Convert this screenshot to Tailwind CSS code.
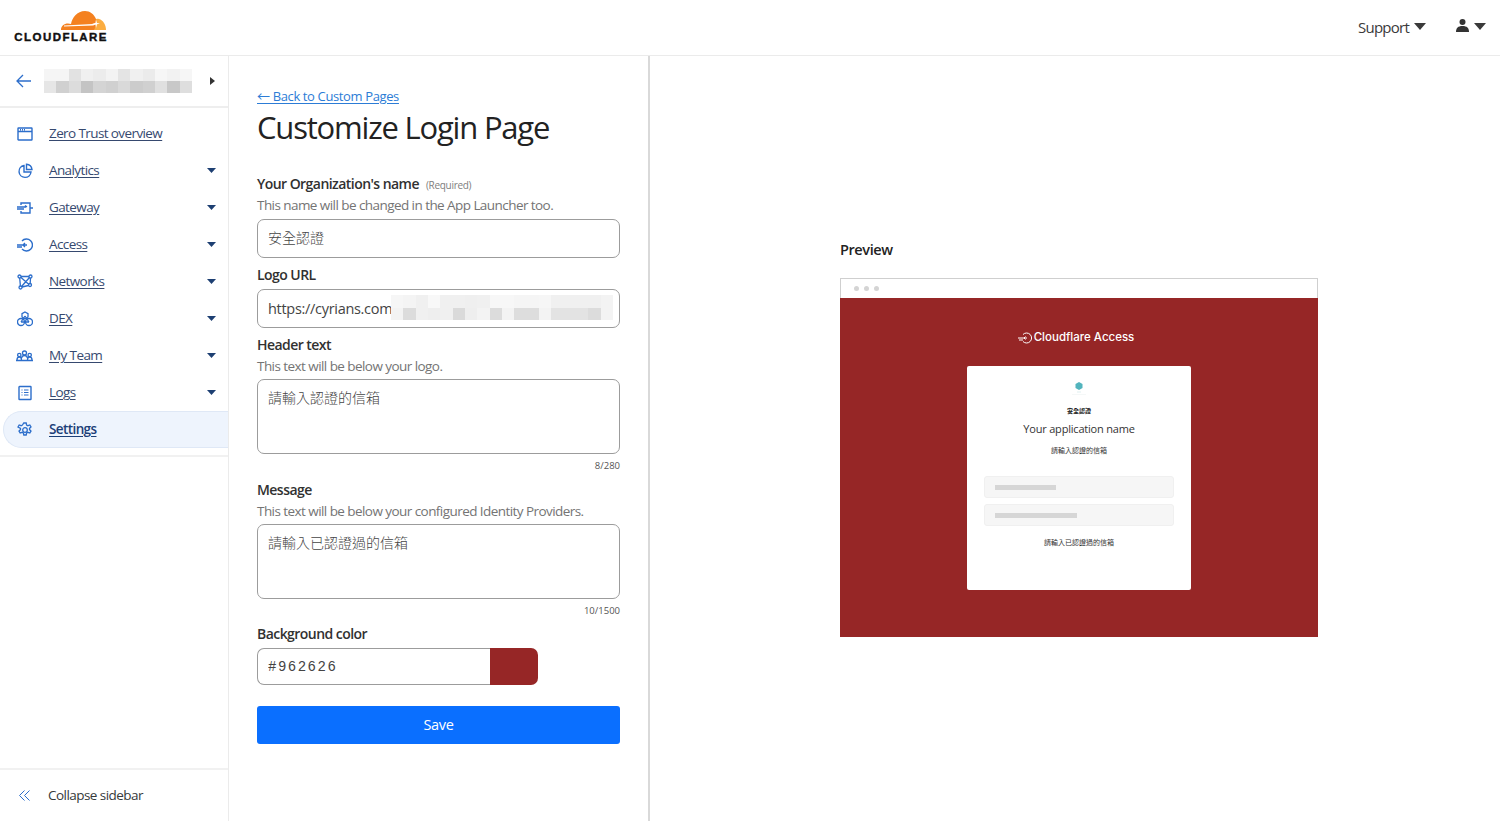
<!DOCTYPE html>
<html lang="en">
<head>
<meta charset="UTF-8" />
<title>Customize Login Page</title>
<script src="https://cdn.jsdelivr.net/npm/@tailwindcss/browser@4"></script>
</head>
<body class="bg-white h-[821px] overflow-hidden flex flex-col font-['Open_Sans','Noto_Sans_CJK_TC',sans-serif] text-[#36393a]">
  <!-- top bar -->
  <header class="h-[56px] shrink-0 border-b border-[#ebebeb] flex items-center justify-between pl-[14px] pr-[14px]">
    <a href="#" class="flex flex-col items-end w-[94px] mt-[-3px]">
      <svg width="46" height="21" viewBox="0 0 46 21" class="mr-[1px]">
        <path d="M29 20 L31 11 C33 9 36 8.500 38 9 C42 10 45 15 45 20 Z" fill="#fbad41"/>
        <path d="M0 20 C0 16 3 13.500 7 13.500 C8 13.500 9 13.700 10 14 C11 8 16 1 24 1 C29 1 33 4 35 9 C36 13 35 17 33 20 Z" fill="#f48120"/>
        <path d="M3 15.500 L32 14 L38 13.300 L32 15.400 L3 16.500 Z" fill="#fff"/>
        <path d="M35 9.500 L36 13 L39 13.500 L36 14.200 L35 18 L34.400 14.200 L31 13.500 L34.400 13 Z" fill="#fff"/>
      </svg>
      <span class="block text-[11.500px] leading-[11px] mt-[1px] font-bold tracking-[1.450px] text-[#111] font-['Liberation_Sans',sans-serif] whitespace-nowrap [-webkit-text-stroke:0.4px_#111]">CLOUDFLARE</span>
    </a>
    <div class="flex items-center">
      <span class="text-[15px] tracking-[-0.75px] text-[#3a3a3a]">Support</span>
      <svg width="12" height="7" viewBox="0 0 12 7" class="ml-[5px] mt-[-3px]"><path d="M0 0h12L6 7z" fill="#3a3a3a"/></svg>
      <svg width="13" height="13" viewBox="0 0 13 13" class="ml-[30px] mt-[-4px]"><circle cx="6.500" cy="3" r="3" fill="#333"/><path d="M0 13c0-4 2-6 6.500-6S13 9 13 13z" fill="#333"/></svg>
      <svg width="12" height="7" viewBox="0 0 12 7" class="ml-[5px] mt-[-3px]"><path d="M0 0h12L6 7z" fill="#3a3a3a"/></svg>
    </div>
  </header>

  <div class="flex-1 flex min-h-0">
    <!-- sidebar -->
    <aside class="w-[229px] shrink-0 border-r border-[#ebebeb] flex flex-col">
      <div class="h-[52px] shrink-0 border-b-2 border-[#eeeeee] flex items-center pl-[16px] pr-[13px]">
        <svg width="15" height="14" viewBox="0 0 15 14" fill="none" stroke="#2c6ecb" stroke-width="1.300"><path d="M15 7H1M7 1 1 7l6 6"/></svg>
        <div id="acct" class="ml-[13px] w-[148px] h-[24px] grid grid-cols-12 grid-rows-2"></div>
        <svg width="5" height="8" viewBox="0 0 5 8" class="ml-auto"><path d="M0 0l5 4-5 4z" fill="#333"/></svg>
      </div>
      <nav class="pt-[7px] pb-[7px] border-b-2 border-[#f1f1f1] flex flex-col text-[13.500px] tracking-[-0.6px] text-[#36496f]">
        <a href="#" class="h-[37px] flex items-center pl-[17px] pr-[12px] gap-[16px]">
          <svg class="w-[16px] h-[16px]" viewBox="0 0 16 16" fill="none" stroke="#2c6ecb" stroke-width="1.400"><rect x="1" y="2" width="14" height="12" rx=".5"/><path d="M1 5.500h14M3 3.800h1M5 3.800h1M7 3.800h1"/></svg>
          <span class="underline underline-offset-2">Zero Trust overview</span>
        </a>
        <a href="#" class="h-[37px] flex items-center pl-[17px] pr-[12px] gap-[16px]">
          <svg class="w-[16px] h-[16px]" viewBox="0 0 16 16" fill="none" stroke="#2c6ecb" stroke-width="1.400"><path d="M7 2.500A6 6 0 1 0 14 9H7z"/><path d="M9.500 1.200A6 6 0 0 1 15 6.500H9.500z"/></svg>
          <span class="underline underline-offset-2">Analytics</span>
          <svg width="9" height="5" viewBox="0 0 9 5" class="ml-auto"><path d="M0 0h9L4.500 5z" fill="#1d3f72"/></svg>
        </a>
        <a href="#" class="h-[37px] flex items-center pl-[17px] pr-[12px] gap-[16px]">
          <svg class="w-[16px] h-[16px]" viewBox="0 0 16 16" fill="none" stroke="#2c6ecb" stroke-width="1.400"><path d="M4 5V3h9v10H4v-2M13 8h3M0 7h9M0 9h7M8 5.500 10 7"/></svg>
          <span class="underline underline-offset-2">Gateway</span>
          <svg width="9" height="5" viewBox="0 0 9 5" class="ml-auto"><path d="M0 0h9L4.500 5z" fill="#1d3f72"/></svg>
        </a>
        <a href="#" class="h-[37px] flex items-center pl-[17px] pr-[12px] gap-[16px]">
          <svg class="w-[16px] h-[16px]" viewBox="0 0 16 16" fill="none" stroke="#2c6ecb" stroke-width="1.400"><path d="M5 4a6 6 0 1 1 0 8"/><path d="M0 8h10M8 6 6 8l2 2M0 10h5"/></svg>
          <span class="underline underline-offset-2">Access</span>
          <svg width="9" height="5" viewBox="0 0 9 5" class="ml-auto"><path d="M0 0h9L4.500 5z" fill="#1d3f72"/></svg>
        </a>
        <a href="#" class="h-[37px] flex items-center pl-[17px] pr-[12px] gap-[16px]">
          <svg class="w-[16px] h-[16px]" viewBox="0 0 16 16" fill="none" stroke="#2c6ecb" stroke-width="1.300"><circle cx="2.500" cy="2.500" r="1.500"/><circle cx="13.500" cy="2.500" r="1.500"/><circle cx="3.500" cy="13.500" r="1.500"/><circle cx="13" cy="11" r="1.500"/><path d="M4 2.500h8M2.700 4l.7 8M5 13l6.500-1.500M13.500 4l-.3 5.500M4 3.500l8 7M12.500 3.500 4.500 12.500"/></svg>
          <span class="underline underline-offset-2">Networks</span>
          <svg width="9" height="5" viewBox="0 0 9 5" class="ml-auto"><path d="M0 0h9L4.500 5z" fill="#1d3f72"/></svg>
        </a>
        <a href="#" class="h-[37px] flex items-center pl-[17px] pr-[12px] gap-[16px]">
          <svg class="w-[16px] h-[16px]" viewBox="0 0 16 16" fill="none" stroke="#2c6ecb" stroke-width="1.300"><path d="M8 1l3 1.700v3.300L8 8 5 6V2.700z"/><circle cx="4" cy="11" r="3.500"/><circle cx="12" cy="11" r="3.500"/><path d="M8 5l-4 6M8 5l4 6M4 11h8"/></svg>
          <span class="underline underline-offset-2">DEX</span>
          <svg width="9" height="5" viewBox="0 0 9 5" class="ml-auto"><path d="M0 0h9L4.500 5z" fill="#1d3f72"/></svg>
        </a>
        <a href="#" class="h-[37px] flex items-center pl-[16px] pr-[12px] gap-[16px]">
          <svg class="w-[17px] h-[16px]" viewBox="0 0 17 16" fill="none" stroke="#2c6ecb" stroke-width="1.300"><circle cx="8.500" cy="5" r="2"/><circle cx="3.300" cy="7" r="1.700"/><circle cx="13.700" cy="7" r="1.700"/><path d="M0 12.500h17M1 12c0-2 .8-3 2.300-3s2.200 1 2.200 3M11.500 12c0-2 .7-3 2.200-3s2.300 1 2.300 3M5.500 10c.3-1.500 1.300-2.500 3-2.500s2.700 1 3 2.500"/></svg>
          <span class="underline underline-offset-2">My Team</span>
          <svg width="9" height="5" viewBox="0 0 9 5" class="ml-auto"><path d="M0 0h9L4.500 5z" fill="#1d3f72"/></svg>
        </a>
        <a href="#" class="h-[37px] flex items-center pl-[17px] pr-[12px] gap-[16px]">
          <svg class="w-[16px] h-[16px]" viewBox="0 0 16 16" fill="none" stroke="#2c6ecb" stroke-width="1.400"><rect x="2" y="1.500" width="12" height="13" rx=".5"/><path d="M4.500 5h1M7 5h4.500M4.500 7.500h1M7 7.500h4.500M4.500 10h1M7 10h4.500" stroke-width="1.100"/></svg>
          <span class="underline underline-offset-2">Logs</span>
          <svg width="9" height="5" viewBox="0 0 9 5" class="ml-auto"><path d="M0 0h9L4.500 5z" fill="#1d3f72"/></svg>
        </a>
        <a href="#" class="h-[37px] ml-[3px] flex items-center pl-[13px] gap-[16px] rounded-l-full bg-[#eef4fd] border border-r-0 border-[#dfe8f6] font-semibold text-[#1c3f78]">
          <svg class="w-[16px] h-[16px]" viewBox="0 0 16 16" fill="none" stroke="#2c6ecb" stroke-width="1.300"><circle cx="8" cy="8" r="2.300"/><path d="M6.800 1h2.400l.4 2 1.300.7 1.900-.7 1.200 2-1.500 1.400v1.200l1.500 1.400-1.200 2-1.900-.7-1.300.7-.4 2H6.800l-.4-2-1.300-.7-1.900.7-1.200-2 1.500-1.400V6.400L1 5l1.200-2 1.900.7 1.300-.7z"/></svg>
          <span class="underline underline-offset-2">Settings</span>
        </a>
      </nav>
      <div class="mt-auto h-[53px] border-t-2 border-[#f1f1f1] flex items-center pl-[19px] gap-[18px] text-[13.500px] tracking-[-0.55px] text-[#36393a]">
        <svg width="11" height="11" viewBox="0 0 11 11" fill="none" stroke="#2c6ecb" stroke-width="1"><path d="M5.500 .5l-5 5 5 5M10.500 .5l-5 5 5 5"/></svg>
        <span>Collapse sidebar</span>
      </div>
    </aside>

    <!-- form column -->
    <main class="w-[421px] shrink-0 border-r-2 border-[#d9d9d9] pl-[28px] pr-[28px] pt-[31px]">
      <a href="#" class="block text-[13px] leading-[18px] tracking-[-0.37px] text-[#2c7cd6] underline underline-offset-2">← Back to Custom Pages</a>
      <h1 class="text-[31px] leading-[44px] tracking-[-1.200px] text-[#222]">Customize Login Page</h1>

      <div class="mt-[23px] flex items-baseline gap-[7px]">
        <label class="text-[14px] leading-[24px] font-semibold tracking-[-0.55px] text-[#313131]">Your Organization's name</label>
        <span class="text-[10px] tracking-[-0.3px] text-[#808080]">(Required)</span>
      </div>
      <p class="text-[13.500px] leading-[20px] tracking-[-0.56px] text-[#747474] mt-[-1px]">This name will be changed in the App Launcher too.</p>
      <input value="安全認證" class="mt-[4px] block w-full h-[39px] px-[10px] pb-[3px] border border-[#9c9c9c] rounded-[7px] text-[14px] font-light text-[#444] outline-none" />

      <label class="block mt-[5px] text-[14px] leading-[24px] font-semibold tracking-[-0.55px] text-[#313131]">Logo URL</label>
      <div class="relative mt-[2px]">
        <input value="https://cyrians.com" class="block w-full h-[39px] px-[10px] border border-[#9c9c9c] rounded-[7px] text-[14.500px] tracking-[-0.3px] text-[#444] outline-none" />
        <div id="url" class="absolute left-[134px] top-[6px] w-[222px] h-[25px] grid grid-cols-18 grid-rows-2"></div>
      </div>

      <label class="block mt-[5px] text-[14px] leading-[24px] font-semibold tracking-[-0.55px] text-[#313131]">Header text</label>
      <p class="text-[13.500px] leading-[20px] tracking-[-0.56px] text-[#747474] mt-[-1px]">This text will be below your logo.</p>
      <textarea class="mt-[3px] block w-full h-[75px] px-[10px] py-[7px] border border-[#9c9c9c] rounded-[7px] text-[14px] font-light text-[#444] resize-none outline-none">請輸入認證的信箱</textarea>
      <p class="text-right text-[9.500px] leading-[14px] mt-[5px] text-[#555]">8/280</p>

      <label class="block mt-[5px] text-[14px] leading-[24px] font-semibold tracking-[-0.55px] text-[#313131]">Message</label>
      <p class="text-[13.500px] leading-[20px] tracking-[-0.56px] text-[#747474] mt-[-1px]">This text will be below your configured Identity Providers.</p>
      <textarea class="mt-[3px] block w-full h-[75px] px-[10px] py-[7px] border border-[#9c9c9c] rounded-[7px] text-[14px] font-light text-[#444] resize-none outline-none">請輸入已認證過的信箱</textarea>
      <p class="text-right text-[9.500px] leading-[14px] mt-[5px] text-[#555]">10/1500</p>

      <label class="block mt-[4px] text-[14px] leading-[24px] font-semibold tracking-[-0.55px] text-[#313131]">Background color</label>
      <div class="mt-[2px] flex w-[281px] h-[37px]">
        <input value="#962626" class="w-[233px] px-[10px] pt-[2px] border border-r-0 border-[#9c9c9c] rounded-l-[7px] font-['Liberation_Mono',monospace] text-[14px] tracking-[1.500px] text-[#444] outline-none" />
        <div class="flex-1 bg-[#962626] rounded-r-[7px]"></div>
      </div>

      <button class="mt-[21px] block w-full h-[38px] rounded-[3px] bg-[#0a6fff] text-white text-[14.500px] tracking-[-0.3px]">Save</button>
    </main>

    <!-- preview -->
    <section class="flex-1 pl-[190px] pt-[183px]">
      <h2 class="text-[14.500px] leading-[22px] font-semibold tracking-[-0.4px] text-[#222]">Preview</h2>
      <div class="mt-[17px] w-[478px] h-[359px] flex flex-col">
        <div class="h-[20px] shrink-0 border border-b-0 border-[#cfcfcf] flex items-center pl-[13px] gap-[5px]">
          <span class="w-[5px] h-[5px] rounded-full bg-[#d4d4d4]"></span>
          <span class="w-[5px] h-[5px] rounded-full bg-[#d4d4d4]"></span>
          <span class="w-[5px] h-[5px] rounded-full bg-[#d4d4d4]"></span>
        </div>
        <div class="flex-1 bg-[#962626] flex flex-col items-center">
          <div class="mt-[33px] h-[14px] flex items-center gap-[1px] text-white text-[11.500px] font-medium font-['Inter','Liberation_Sans',sans-serif] mr-[6px]">
            <svg width="15" height="12" viewBox="0 0 15 12" fill="none" stroke="#fff" stroke-width="1"><path d="M5 2.500a5 5 0 1 1 0 7"/><path d="M0 6h9M7.500 4.500 6 6l1.500 1.500M1 8h4"/></svg>
            <span>Cloudflare Access</span>
          </div>
          <div class="mt-[21px] w-[224px] h-[224px] bg-white rounded-[2px] flex flex-col items-center pt-[16px]">
            <svg width="14" height="13" viewBox="0 0 14 13"><path d="M7 0l3.500 2v4L7 8 3.500 6V2z" fill="#52b4bd"/><path d="M5 10h4" stroke="#c9e4e6" stroke-width=".6"/><path d="M0 12.500h14" stroke="#eef4f4" stroke-width=".6"/></svg>
            <p class="mt-[12px] text-[6px] leading-[8px] font-semibold text-[#222]">安全認證</p>
            <p class="mt-[5px] text-[11px] leading-[18px] tracking-[-0.2px] text-[#333]">Your application name</p>
            <p class="mt-[8px] text-[7px] leading-[10px] text-[#333]">請輸入認證的信箱</p>
            <div class="mt-[20px] w-[190px] flex flex-col gap-[6px]">
              <div class="h-[22px] rounded-[3px] bg-[#f6f6f6] border border-[#f0f0f0] flex items-center pl-[10px]"><span class="w-[61px] h-[5px] bg-[#d6d6d6]"></span></div>
              <div class="h-[22px] rounded-[3px] bg-[#f6f6f6] border border-[#f0f0f0] flex items-center pl-[10px]"><span class="w-[82px] h-[5px] bg-[#d6d6d6]"></span></div>
            </div>
            <p class="mt-[12px] text-[7px] leading-[10px] text-[#333]">請輸入已認證過的信箱</p>
          </div>
        </div>
      </div>
    </section>
  </div>

  <script>
    // blurred-out account name and logo address
    const fill = (id, shades) => {
      const box = document.getElementById(id);
      shades.forEach(s => {
        const d = document.createElement('div');
        d.style.background = s;
        box.appendChild(d);
      });
    };
    fill('acct', ['#f5f5f5','#f5f5f5','#e2e2e2','#f0f0f0','#ececec','#f3f3f3','#e4e4e4','#f0f0f0','#ebebeb','#f6f6f6','#f2f2f2','#f6f6f6',
                  '#e6e6e6','#d0d0d0','#dcdcdc','#c4c4c4','#d4d4d4','#d0d0d0','#d9d9d9','#cccccc','#d0d0d0','#e0e0e0','#c8c8c8','#dedede']);
    fill('url', ['#f6f6f6','#f4f4f4','#f0f0f0','#f8f8f8','#f0f0f0','#f0f0f0','#efefef','#f0f0f0','#f7f7f7','#f7f7f7','#f5f5f5','#f5f5f5','#f6f6f6','#f0f0f0','#f0f0f0','#f0f0f0','#f0f0f0','#f3f3f3',
                 '#f3f3f3','#dcdcdc','#f0f0f0','#eeeeee','#f0f0f0','#dadada','#eeeeee','#f3f3f3','#dcdcdc','#f3f3f3','#dddddd','#dddddd','#f3f3f3','#e3e3e3','#e3e3e3','#e3e3e3','#dcdcdc','#f3f3f3']);
  </script>
</body>
</html>
